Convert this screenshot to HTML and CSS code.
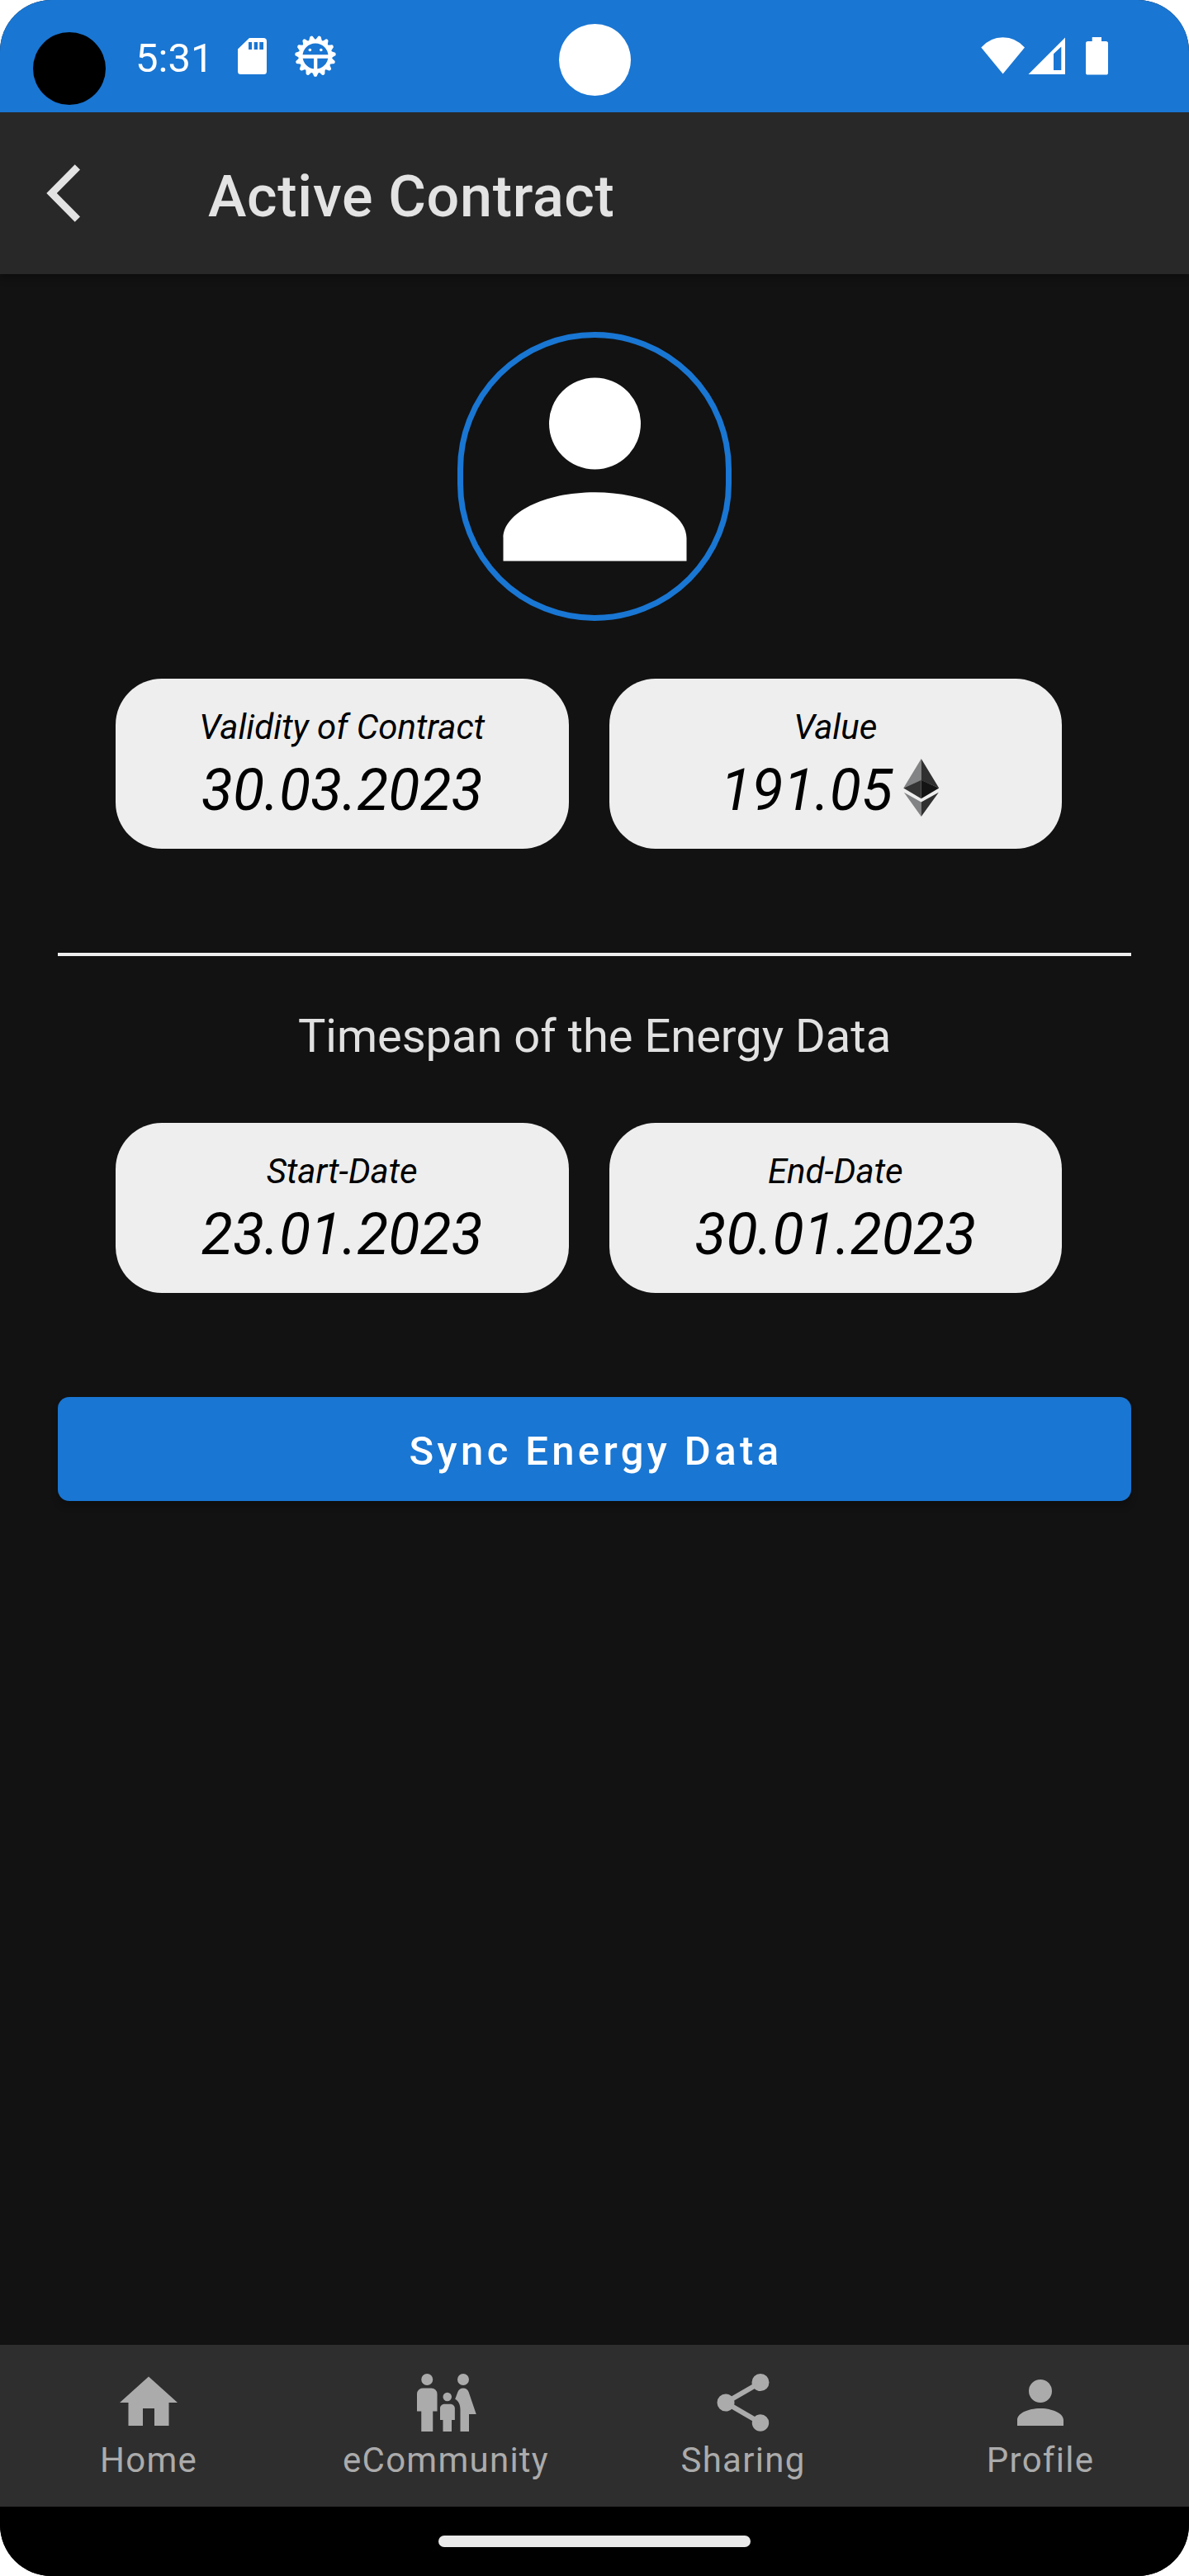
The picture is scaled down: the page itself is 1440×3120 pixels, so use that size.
FILE: index.html
```
<!DOCTYPE html>
<html lang="en">
<head>
<meta charset="utf-8">
<title>Active Contract</title>
<link rel="stylesheet" href="styles.css">
</head>
<body>
<div class="screen">
  <div class="status-bar">
    <div class="corner-cutout"></div>
    <div class="clock">5:31</div>
    <svg class="sd-icon" width="35" height="44" viewBox="0 0 35 44">
      <path fill="#fff" fill-rule="evenodd" d="M14 0H31Q35 0 35 4V40.5Q35 44 31.500 44H3.500Q0 44 0 40.500V13.500ZM13 5V14H17V5ZM19.700 5V14H24V5ZM26.300 5V14H31V5Z"/>
    </svg>
    <svg class="gear-icon" width="50" height="50" viewBox="-25 -25 50 50">
      <defs><path id="tooth" d="M-4.200 19L-2.400 22.700Q-2 24.900 0 24.900T2.400 22.700L4.200 19Z"/></defs>
      <g fill="#fff">
        <use href="#tooth"/><use href="#tooth" transform="rotate(24)"/><use href="#tooth" transform="rotate(48)"/>
        <use href="#tooth" transform="rotate(72)"/><use href="#tooth" transform="rotate(96)"/><use href="#tooth" transform="rotate(120)"/>
        <use href="#tooth" transform="rotate(144)"/><use href="#tooth" transform="rotate(168)"/><use href="#tooth" transform="rotate(192)"/>
        <use href="#tooth" transform="rotate(216)"/><use href="#tooth" transform="rotate(240)"/><use href="#tooth" transform="rotate(264)"/>
        <use href="#tooth" transform="rotate(288)"/><use href="#tooth" transform="rotate(312)"/><use href="#tooth" transform="rotate(336)"/>
        <circle cx="-6.600" cy="-7.500" r="1.800"/><circle cx="6.800" cy="-7.500" r="1.800"/>
      </g>
      <circle r="18" fill="none" stroke="#fff" stroke-width="5"/>
      <path d="M-17 .500H17M.200 .500V17" fill="none" stroke="#fff" stroke-width="4.300"/>
    </svg>
    <div class="camera-cutout"></div>
    <svg class="signal-icons" width="154" height="46" viewBox="1188 45 154 46">
      <g fill="#fff">
        <path d="M1188.300 57.500Q1199 45.200 1214.600 45.200T1241 57.500L1214.600 89.500Z"/>
        <path fill-rule="evenodd" d="M1245.500 90L1290 45.500V90ZM1276 65.300V85H1285.300V56.500Z"/>
        <path d="M1322.700 45H1334V50H1339.500Q1342 50 1342 52.500V88Q1342 90.600 1339.500 90.600H1317.500Q1315 90.600 1315 88V52.500Q1315 50 1317.500 50H1322.700Z"/>
      </g>
    </svg>
  </div>

  <header class="app-bar">
    <svg class="back-icon" width="42" height="70" viewBox="56 199 42 70">
      <path fill="#e3e3e3" d="M56.300 234L90.700 199.300L97 205.600L68.800 234L97 262.400L90.700 268.800Z"/>
    </svg>
    <h1 class="title">Active Contract</h1>
  </header>

  <main class="content">
    <div class="avatar">
      <svg width="333" height="333" viewBox="0 0 24 24">
        <path fill="#fff" d="M12 4a4 4 0 0 1 4 4 4 4 0 0 1-4 4 4 4 0 0 1-4-4 4 4 0 0 1 4-4m0 10c4.420 0 8 1.790 8 4v2H4v-2c0-2.210 3.580-4 8-4z"/>
      </svg>
    </div>

    <div class="cards">
      <div class="card">
        <div class="label">Validity of Contract</div>
        <div class="value">30.03.2023</div>
      </div>
      <div class="card">
        <div class="label">Value</div>
        <div class="value">191.05<svg class="eth-icon" width="70" height="70" viewBox="0 0 70 70">
          <path fill="#828384" d="M34.700 0V26L13.200 35.500ZM13.800 40.700L34.700 52.500V70Z"/>
          <path fill="#303030" d="M34.700 0V26L56.200 35.500ZM55.800 40.700L34.700 52.500V70Z"/>
          <path fill="#343434" d="M34.700 25.700V48.300L13.200 35.500Z"/>
          <path fill="#141414" d="M34.700 25.700V48.300L56.200 35.500Z"/>
        </svg></div>
      </div>
    </div>

    <hr class="divider">
    <h2 class="subtitle">Timespan of the Energy Data</h2>

    <div class="cards">
      <div class="card">
        <div class="label">Start-Date</div>
        <div class="value">23.01.2023</div>
      </div>
      <div class="card">
        <div class="label">End-Date</div>
        <div class="value">30.01.2023</div>
      </div>
    </div>

    <button class="sync-button" type="button">Sync Energy Data</button>
  </main>

  <nav class="bottom-nav">
    <a class="nav-item">
      <svg width="84" height="84" viewBox="0 0 24 24"><path d="M10 20v-6h4v6h5v-8h3L12 3 2 12h3v8z"/></svg>
      <span>Home</span>
    </a>
    <a class="nav-item">
      <svg width="84" height="84" viewBox="0 0 24 24"><path d="M7.500 4a2 2 0 0 1-4 0 2 2 0 0 1 4 0M7.500 15v7h-4v-7H2V9a2 2 0 0 1 2-2h3a2 2 0 0 1 2 2v6zM20 4a2 2 0 0 1-4 0 2 2 0 0 1 4 0M17 22v-7.500c0-1.700-.500-2.900-1.800-3.700l.900-2.430C16.400 7.500 17.100 7 18 7s1.600.500 1.900 1.370L22.500 16H20v6zM14 10a1.500 1.500 0 0 1-3 0 1.500 1.500 0 0 1 3 0M14 18v4h-3v-4h-1v-4c0-.900.700-1.500 1.500-1.500h2c.900 0 1.600.600 1.600 1.500v4z"/></svg>
      <span>eCommunity</span>
    </a>
    <a class="nav-item">
      <svg width="84" height="84" viewBox="0 0 24 24"><path d="M18 16.080c-.760 0-1.440.300-1.960.770L8.910 12.700c.050-.230.090-.460.090-.700s-.040-.470-.090-.700l7.050-4.110c.540.500 1.250.810 2.040.810a3 3 0 0 0 3-3 3 3 0 0 0-3-3 3 3 0 0 0-3 3c0 .240.040.470.090.700L8.040 9.810C7.500 9.310 6.790 9 6 9a3 3 0 0 0-3 3 3 3 0 0 0 3 3c.790 0 1.500-.310 2.040-.810l7.120 4.150c-.050.210-.080.430-.080.660 0 1.610 1.310 2.910 2.920 2.910s2.920-1.300 2.920-2.910A2.920 2.920 0 0 0 18 16.080z"/></svg>
      <span>Sharing</span>
    </a>
    <a class="nav-item">
      <svg width="84" height="84" viewBox="0 0 24 24"><path d="M12 4a4 4 0 0 1 4 4 4 4 0 0 1-4 4 4 4 0 0 1-4-4 4 4 0 0 1 4-4m0 10c4.420 0 8 1.790 8 4v2H4v-2c0-2.210 3.580-4 8-4z"/></svg>
      <span>Profile</span>
    </a>
  </nav>

  <div class="gesture-bar"><div class="home-indicator"></div></div>
</div>
</body>
</html>
```
FILE: styles.css
```
* {
  box-sizing: border-box;
}

body {
  margin: 0;
  background: #fff;
  font-family: Roboto, "Liberation Sans", sans-serif;
}

svg {
  display: block;
  flex: none;
}

.screen {
  display: flex;
  flex-direction: column;
  width: 1440px;
  height: 3120px;
  border-radius: 62px;
  overflow: hidden;
  background: #121212;
}

/* Status bar */
.status-bar {
  position: relative;
  display: flex;
  align-items: flex-start;
  height: 136px;
  padding: 0 98px 0 40px;
  background: #1976d3;
  color: #fff;
}

.corner-cutout {
  width: 88px;
  height: 88px;
  margin-top: 39px;
  border-radius: 50%;
  background: #000;
}

.clock {
  width: 124px;
  margin: 42px 0 0 36px;
  font-size: 49px;
  line-height: 57px;
}

.sd-icon {
  margin-top: 46px;
}

.gear-icon {
  margin: 43px 0 0 34px;
}

.camera-cutout {
  position: absolute;
  top: 29px;
  left: 677px;
  width: 87px;
  height: 87px;
  border-radius: 50%;
  background: #fff;
}

.signal-icons {
  margin: 45px 0 0 auto;
}

/* App bar */
.app-bar {
  display: flex;
  align-items: center;
  height: 196px;
  padding-left: 56px;
  background: #282828;
  box-shadow: 0 4px 10px rgba(0, 0, 0, 0.35);
}

.title {
  margin: 0 0 0 154px;
  padding-top: 8px;
  color: #e3e3e3;
  font-size: 70px;
  font-weight: 500;
  line-height: 84px;
  letter-spacing: 0.01em;
}

/* Content */
.content {
  display: flex;
  flex: 1;
  flex-direction: column;
  align-items: center;
  padding: 70px 70px 0;
}

.avatar {
  display: flex;
  justify-content: center;
  width: 332px;
  height: 350px;
  margin-bottom: 70px;
  border: 7px solid #1976d3;
  border-radius: 175px;
}

.avatar svg {
  margin-top: -7px;
}

.cards {
  display: flex;
  align-self: stretch;
  gap: 49px;
  padding: 0 84px 0 70px;
}

.card {
  flex: 1;
  height: 206px;
  padding-top: 24px;
  border-radius: 56px;
  background: #eee;
  color: #000;
  font-style: italic;
  text-align: center;
}

.label {
  font-size: 42px;
  line-height: 70px;
}

.value {
  display: flex;
  justify-content: center;
  font-size: 70px;
  line-height: 82px;
}

.eth-icon {
  margin-top: 3px;
}

.divider {
  width: 1300px;
  height: 4px;
  margin: 126px 0 62px;
  border: 0;
  background: #eee;
}

.subtitle {
  margin: 0 0 70px;
  color: #e1e1e1;
  font-size: 56px;
  font-weight: 400;
  line-height: 70px;
}

.sync-button {
  width: 1300px;
  height: 126px;
  margin-top: 126px;
  padding: 4px 0 0 3px;
  border: 0;
  border-radius: 14px;
  background: #1976d3;
  box-shadow: 0 7px 8px rgba(0, 0, 0, 0.2);
  color: #fff;
  font-family: inherit;
  font-size: 49px;
  font-weight: 500;
  letter-spacing: 0.0892857em;
}

/* Bottom navigation */
.bottom-nav {
  display: flex;
  height: 196px;
  padding-top: 28px;
  background: #2e2e2e;
  color: #ababab;
}

.nav-item {
  display: flex;
  flex: 1;
  flex-direction: column;
  align-items: center;
  font-size: 42px;
  line-height: 56px;
  letter-spacing: 0.03em;
}

.nav-item svg {
  fill: currentColor;
}

.gesture-bar {
  display: flex;
  justify-content: center;
  height: 84px;
  padding-top: 35px;
  background: #000;
}

.home-indicator {
  width: 378px;
  height: 14px;
  border-radius: 7px;
  background: #eaeaea;
}
```
